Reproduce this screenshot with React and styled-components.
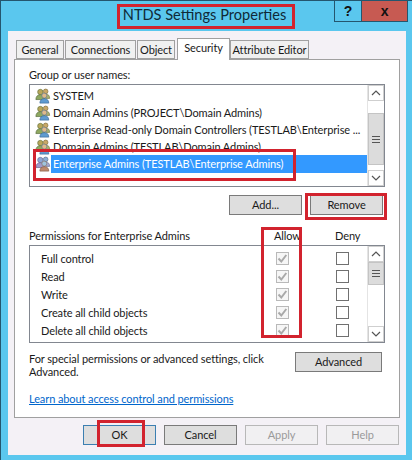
import React from 'react'
import styled, { createGlobalStyle } from 'styled-components'

const principals = [
  { id: 1, name: 'SYSTEM' },
  { id: 2, name: 'Domain Admins (PROJECT\\Domain Admins)' },
  { id: 3, name: 'Enterprise Read-only Domain Controllers (TESTLAB\\Enterprise ...' },
  { id: 4, name: 'Domain Admins (TESTLAB\\Domain Admins)' },
  { id: 5, name: 'Enterprise Admins (TESTLAB\\Enterprise Admins)', selected: true },
]

// last row is scrolled almost out of view, only its checkboxes show
const permissions = [
  'Full control',
  'Read',
  'Write',
  'Create all child objects',
  'Delete all child objects',
  '',
]

const tabs = [
  { name: 'General', width: 48 },
  { name: 'Connections', width: 71 },
  { name: 'Object', width: 38 },
  { name: 'Security', width: 53, active: true },
  { name: 'Attribute Editor', width: 79 },
]

const GroupIcon = ({ selected }) => (
  <IconSvg viewBox="0 0 18 18" $selected={selected}>
    <circle cx="6" cy="4.5" r="3" fill="#b9a659" stroke="#6d7a45" strokeWidth="0.8" />
    <path d="M1 13c0-3.5 2-5.5 5-5.5s5 2 5 5.5z" fill="#8ea860" stroke="#5c7040" strokeWidth="0.8" />
    <circle cx="12" cy="3.8" r="2.6" fill="#c9a866" stroke="#85713f" strokeWidth="0.8" />
    <path d="M9 8.500c1-1.400 2-1.800 3.200-1.800 2.600 0 4.300 1.800 4.300 5H12z" fill="#a8b070" stroke="#7c7c48" strokeWidth="0.8" />
    <circle cx="10.5" cy="8.6" r="2.8" fill="#e0b98a" stroke="#6f7f90" strokeWidth="0.8" />
    <path d="M5.500 17c0-3.300 2-5 5-5s5 1.700 5 5z" fill="#5f9bd0" stroke="#3c6c9c" strokeWidth="0.8" />
  </IconSvg>
)

const Chevron = ({ down }) => (
  <svg width="10" height="6" viewBox="0 0 10 6">
    <path d={down ? 'M1 1l4 4 4-4' : 'M1 5l4-4 4 4'} fill="none" stroke="#555" strokeWidth="1.2" />
  </svg>
)

const Grip = () => (
  <svg width="8" height="7" viewBox="0 0 8 7">
    <path d="M0 .5h8M0 3.500h8M0 6.500h8" stroke="#555" strokeWidth="1" />
  </svg>
)

const Scroller = ({ gap, thumb }) => (
  <ScrollTrack>
    <ScrollArrow><Chevron /></ScrollArrow>
    <ScrollGap $height={gap} />
    <ScrollThumb $height={thumb}><Grip /></ScrollThumb>
    <ScrollFill />
    <ScrollArrow><Chevron down /></ScrollArrow>
  </ScrollTrack>
)

const Check = ({ checked }) => (
  <CheckBox $checked={checked}>
    {checked && (
      <svg width="11" height="11" viewBox="0 0 11 11">
        <path d="M1.500 5.500l2.800 3 5-6.500" fill="none" stroke="#a9a9a9" strokeWidth="2" />
      </svg>
    )}
  </CheckBox>
)

const App = () => {
  return (
    <Desktop>
      <GlobalStyle />
      <TitleBar>
        <span />
        <Title>NTDS Settings Properties</Title>
        <Caption>
          <CaptionButton>?</CaptionButton>
          <CaptionButton $close>x</CaptionButton>
        </Caption>
      </TitleBar>

      <Client>
        <TabStrip>
          {tabs.map((tab) => (
            <Tab key={tab.name} $active={tab.active} $width={tab.width}>{tab.name}</Tab>
          ))}
        </TabStrip>

        <Panel>
          <Label>Group or user names:</Label>
          <ListFrame $height={103}>
            <PrincipalRows>
              {principals.map((p) => (
                <PrincipalRow key={p.id}>
                  <GroupIcon selected={p.selected} />
                  <PrincipalName $selected={p.selected}>{p.name}</PrincipalName>
                </PrincipalRow>
              ))}
            </PrincipalRows>
            <Scroller gap={12} thumb={52} />
          </ListFrame>

          <ButtonRow>
            <Button>Add...</Button>
            <Button>Remove</Button>
          </ButtonRow>

          <PermissionHead>
            <span>Permissions for Enterprise Admins</span>
            <span>Allow</span>
            <span>Deny</span>
          </PermissionHead>
          <ListFrame $height={98}>
            <PermissionRows>
              {permissions.map((name, i) => (
                <PermissionRow key={i}>
                  <PermissionName>{name}</PermissionName>
                  <Check checked />
                  <Check />
                </PermissionRow>
              ))}
            </PermissionRows>
            <Scroller gap={0} thumb={23} />
          </ListFrame>

          <AdvancedRow>
            <AdvancedText>For special permissions or advanced settings, click Advanced.</AdvancedText>
            <Button $wide>Advanced</Button>
          </AdvancedRow>

          <LearnLink href="#">Learn about access control and permissions</LearnLink>
        </Panel>

        <Footer>
          <Button $default>OK</Button>
          <Button>Cancel</Button>
          <Button disabled>Apply</Button>
          <Button disabled>Help</Button>
        </Footer>
      </Client>

      {/* red annotations drawn over the screenshot */}
      <Callout $x={117} $y={4} $w={178} $h={25} />
      <Callout $x={33} $y={149} $w={263} $h={32} />
      <Callout $x={305} $y={193} $w={82} $h={27} />
      <Callout $x={261} $y={227} $w={41} $h={111} />
      <Callout $x={97} $y={420} $w={48} $h={27} />
    </Desktop>
  )
}

const GlobalStyle = createGlobalStyle`
  html, body {
    margin: 0;
    padding: 0;
  }
  * {
    box-sizing: border-box;
  }
  body {
    font-family: Lato, "Open Sans", sans-serif;
    font-size: 11px;
    letter-spacing: -0.1px;
    color: #1a1a1a;
  }
`

const Desktop = styled.div`
  position: relative;
  width: 412px;
  height: 460px;
  overflow: hidden;
  background: #5ac7ee;
  border-top: 1px solid #24566e;
  border-left: 1px solid #24566e;
`

const TitleBar = styled.div`
  display: grid;
  grid-template-columns: 1fr auto 1fr;
  height: 30px;
  padding-right: 4px;
`

const Title = styled.div`
  font-size: 14.6px;
  letter-spacing: 0;
  line-height: 28px;
  color: #0f2a38;
`

const Caption = styled.div`
  display: flex;
  justify-content: flex-end;
  align-items: flex-start;
`

const CaptionButton = styled.div`
  width: ${(p) => (p.$close ? '46px' : '28px')};
  height: 21px;
  display: flex;
  align-items: center;
  justify-content: center;
  font: bold 14px "Liberation Sans", sans-serif;
  color: #111;
  background: ${(p) => (p.$close ? '#c75a52' : 'transparent')};
  border: 1px solid #24566e;
  border-top: 0;
  border-left-width: ${(p) => (p.$close ? 0 : '1px')};
`

const Client = styled.div`
  width: 398px;
  height: 424px;
  margin-left: 7px;
  padding: 7px 6px 0;
  background: #f4f1f6;
`

const TabStrip = styled.div`
  display: flex;
  align-items: flex-end;
  gap: 1px;
  height: 21px;
  padding-left: 2px;
`

const Tab = styled.div`
  width: ${(p) => p.$width}px;
  height: ${(p) => (p.$active ? '22px' : '19px')};
  margin: ${(p) => (p.$active ? '0 -1px -1px 1px' : '0')};
  padding-top: 1px;
  text-align: center;
  line-height: 16px;
  white-space: nowrap;
  background: ${(p) => (p.$active ? '#fff' : '#f0f0f0')};
  border: 1px solid #a0a0a0;
  border-bottom: ${(p) => (p.$active ? '0' : '1px solid #a0a0a0')};
  position: relative;
  z-index: ${(p) => (p.$active ? 1 : 0)};
`

const Panel = styled.div`
  height: 359px;
  padding: 8px 14px 0;
  background: #fff;
  border: 1px solid #a0a0a0;
`

const Label = styled.div`
  height: 14px;
  line-height: 14px;
`

const ListFrame = styled.div`
  display: flex;
  height: ${(p) => p.$height}px;
  margin-top: 2px;
  background: #fff;
  border: 1px solid #828790;
  overflow: hidden;
`

const PrincipalRows = styled.div`
  flex: 1;
  min-width: 0;
  padding-top: 2px;
`

const PrincipalRow = styled.div`
  display: flex;
  align-items: center;
  height: 17px;
  padding-left: 5px;
  white-space: nowrap;
`

const IconSvg = styled.svg`
  flex: none;
  width: 16px;
  height: 16px;
  filter: ${(p) => (p.$selected ? 'hue-rotate(170deg) saturate(0.7)' : 'none')};
`

const PrincipalName = styled.span`
  flex: ${(p) => (p.$selected ? 1 : 'none')};
  height: 18px;
  line-height: 17px;
  padding-left: 2px;
  background: ${(p) => (p.$selected ? '#3399ff' : 'transparent')};
  color: ${(p) => (p.$selected ? '#fff' : 'inherit')};
`

const ScrollTrack = styled.div`
  flex: none;
  display: flex;
  flex-direction: column;
  width: 17px;
  background: #fff;
  border-left: 1px solid #e4e4e4;
`

const ScrollArrow = styled.div`
  flex: none;
  display: flex;
  align-items: center;
  justify-content: center;
  height: 16px;
  background: #fff;
  border: 1px solid #cfcfcf;
`

const ScrollGap = styled.div`
  flex: none;
  height: ${(p) => p.$height}px;
`

const ScrollFill = styled.div`
  flex: 1;
`

const ScrollThumb = styled.div`
  flex: none;
  display: flex;
  align-items: center;
  justify-content: center;
  height: ${(p) => p.$height}px;
  background: #dcdcdc;
  border: 1px solid #c4c4c4;
`

const ButtonRow = styled.div`
  display: flex;
  justify-content: flex-end;
  gap: 8px;
  margin-top: 8px;
  padding-right: 2px;
`

const Button = styled.button`
  width: ${(p) => (p.$wide ? '87px' : '73px')};
  height: 20px;
  flex: none;
  padding: 0;
  font: inherit;
  letter-spacing: inherit;
  line-height: 16px;
  color: ${(p) => (p.disabled ? '#9a9a9a' : '#1a1a1a')};
  background: ${(p) => (p.disabled ? '#f1f0f2' : '#dedede')};
  border: 1px solid ${(p) => (p.disabled ? '#b8b8b8' : p.$default ? '#3c7fb1' : '#7a7a7a')};
`

const PermissionHead = styled.div`
  display: grid;
  grid-template-columns: 245px 61px auto;
  height: 14px;
  margin-top: 14px;
  line-height: 14px;
`

const PermissionRows = styled.div`
  flex: 1;
  min-width: 0;
  padding-top: 3px;
`

const PermissionRow = styled.div`
  display: grid;
  grid-template-columns: 246px 60px 13px;
  align-items: center;
  height: 18px;
`

const PermissionName = styled.span`
  padding-left: 11px;
`

const CheckBox = styled.span`
  display: flex;
  align-items: center;
  justify-content: center;
  width: 13px;
  height: 13px;
  background: ${(p) => (p.$checked ? '#f6f6f6' : '#fff')};
  border: 1px solid ${(p) => (p.$checked ? '#b9b9b9' : '#707070')};
`

const AdvancedRow = styled.div`
  display: flex;
  justify-content: space-between;
  align-items: flex-start;
  height: 26px;
  margin-top: 9px;
  padding-right: 3px;
`

const AdvancedText = styled.div`
  width: 240px;
  line-height: 13px;
`

const LearnLink = styled.a`
  display: block;
  margin-top: 14px;
  line-height: 14px;
  color: #0066cc;
`

const Footer = styled.div`
  display: flex;
  justify-content: flex-end;
  gap: 8px;
  margin-top: 7px;
  padding-right: 1px;
`

const Callout = styled.div`
  position: absolute;
  left: ${(p) => p.$x - 1}px;
  top: ${(p) => p.$y - 1}px;
  width: ${(p) => p.$w}px;
  height: ${(p) => p.$h}px;
  border: 3px solid #d2232e;
  pointer-events: none;
`

export default App
